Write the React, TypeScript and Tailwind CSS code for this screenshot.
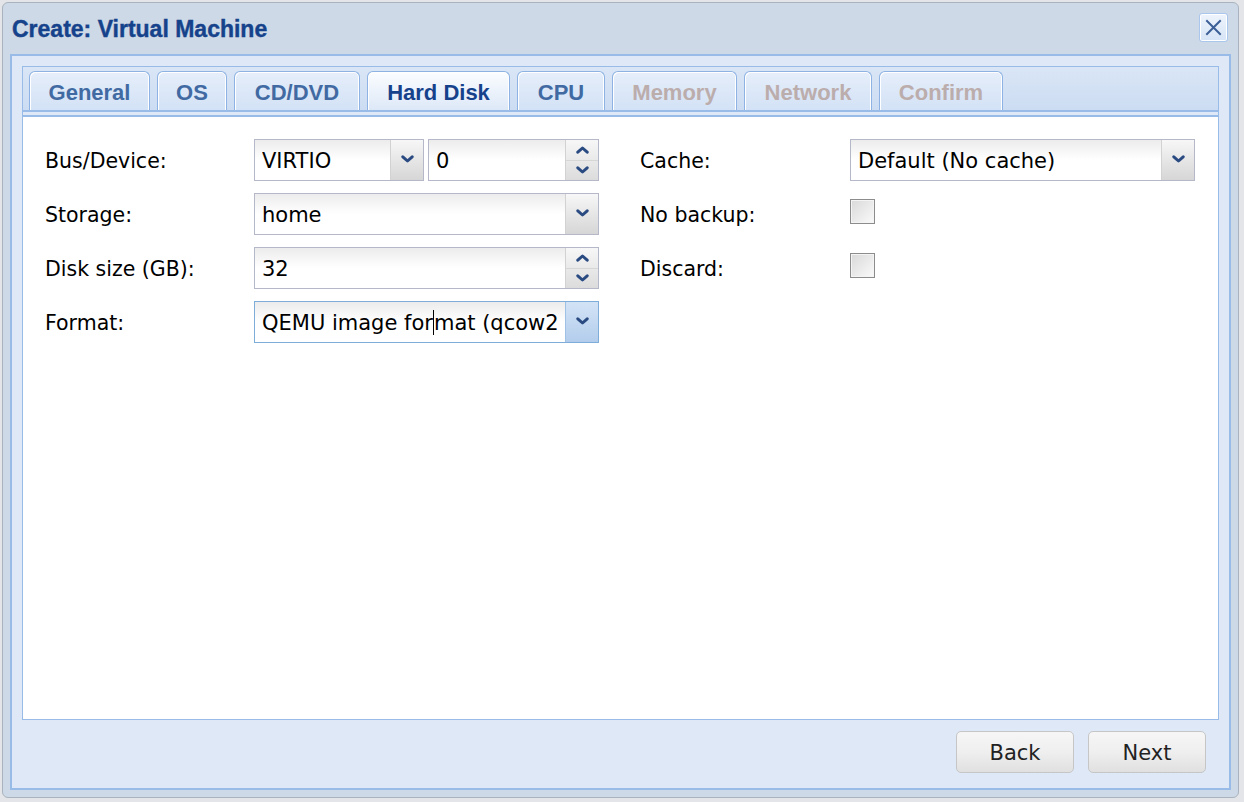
import React from 'react';

const tabs = [
  { label: 'General', width: 'w-[121px]', tone: 'text-[#416aa3]', active: false },
  { label: 'OS', width: 'w-[70px]', tone: 'text-[#416aa3]', active: false },
  { label: 'CD/DVD', width: 'w-[126px]', tone: 'text-[#416aa3]', active: false },
  { label: 'Hard Disk', width: 'w-[143px]', tone: 'text-[#15428b]', active: true },
  { label: 'CPU', width: 'w-[88px]', tone: 'text-[#416aa3]', active: false },
  { label: 'Memory', width: 'w-[125px]', tone: 'text-[#bcadad]', active: false },
  { label: 'Network', width: 'w-[128px]', tone: 'text-[#bcadad]', active: false },
  { label: 'Confirm', width: 'w-[124px]', tone: 'text-[#bcadad]', active: false },
];

const fieldFont = "[font-family:'DejaVu_Sans',Verdana,sans-serif]";

function ChevronDown() {
  return (
    <svg width="13" height="8" viewBox="0 0 13 8">
      <path d="M1.8 1.8 L6.5 6 L11.2 1.8" fill="none" stroke="#2a4a82" strokeWidth="3" strokeLinecap="round" strokeLinejoin="round" />
    </svg>
  );
}

function ChevronUp() {
  return (
    <svg width="13" height="8" viewBox="0 0 13 8">
      <path d="M1.8 6.2 L6.5 2 L11.2 6.2" fill="none" stroke="#2a4a82" strokeWidth="3" strokeLinecap="round" strokeLinejoin="round" />
    </svg>
  );
}

function Combo({ value, width, focused, cursorAt }: { value: string; width: string; focused?: boolean; cursorAt?: number }) {
  return (
    <div
      className={`${width} h-[42px] flex border bg-white ${
        focused ? 'border-[#7eadd9]' : 'border-[#b5b8c8]'
      }`}
    >
      <div className={`flex-1 min-w-0 flex items-center pl-[7px] pt-[3px] text-[21px] text-black bg-gradient-to-b from-[#ececec] via-white to-white ${fieldFont}`}>
        <div className="flex-1 min-w-0 mr-[4px] overflow-hidden whitespace-nowrap">
          {cursorAt !== undefined ? (
            <span>
              {value.slice(0, cursorAt)}
              <span className="inline-block w-px h-[25px] bg-black align-[-5px]" />
              {value.slice(cursorAt)}
            </span>
          ) : (
            value
          )}
        </div>
      </div>
      <div
        className={`w-[33px] shrink-0 flex items-center justify-center pb-[3px] border-l ${
          focused
            ? 'bg-gradient-to-b from-[#d3e3f6] to-[#b3cdec] border-[#9fc1e6]'
            : 'bg-gradient-to-b from-[#f7f7f7] to-[#d6d6d6] border-[#d2d2d2]'
        }`}
      >
        <ChevronDown />
      </div>
    </div>
  );
}

function Spinner({ value, width }: { value: string; width: string }) {
  return (
    <div className={`${width} h-[42px] flex border border-[#b5b8c8] bg-white`}>
      <div className={`flex-1 min-w-0 flex items-center pl-[7px] pt-[3px] text-[21px] text-black bg-gradient-to-b from-[#ececec] via-white to-white ${fieldFont}`}>
        {value}
      </div>
      <div className="w-[33px] shrink-0 flex flex-col border-l border-[#d2d2d2] bg-gradient-to-b from-[#f7f7f7] to-[#dcdcdc]">
        <div className="flex-1 flex items-center justify-center border-b border-[#d6d6d6]">
          <ChevronUp />
        </div>
        <div className="flex-1 flex items-center justify-center">
          <ChevronDown />
        </div>
      </div>
    </div>
  );
}

function Checkbox() {
  return (
    <div className="w-[25px] h-[25px] border border-[#8c8c8c] bg-gradient-to-br from-[#d9d9d9] to-[#fafafa] shadow-[inset_0_0_0_1px_#f4f4f4]" />
  );
}

function Label({ text, width }: { text: string; width: string }) {
  return <div className={`${width} shrink-0 pt-[3px] text-[20.5px] text-black ${fieldFont}`}>{text}</div>;
}

export default function App() {
  return (
    <div className="w-[1244px] h-[802px] bg-[#e3e5e8] pt-[2px] pl-[2px] overflow-hidden">
      <div className="w-[1237px] h-[796px] rounded-[6px] border border-[#a9b3bf] bg-[#cdd9e6] flex flex-col px-[7px] pb-[7px]">
        {/* title bar */}
        <div className="h-[51px] shrink-0 flex items-center justify-between pl-[2px] pr-[3px]">
          <h1 className="text-[23px] font-bold text-[#15428b] [font-family:'Liberation_Sans',Arial,sans-serif] pt-[2px] [-webkit-text-stroke:0.4px_#15428b]">
            Create: Virtual Machine
          </h1>
          <button className="w-[29px] h-[29px] mb-[2px] rounded-[3px] border border-[#a9c6ec] bg-gradient-to-b from-[#eef4fc] to-[#d6e4f6] shadow-[inset_0_0_0_1px_#ffffff] flex items-center justify-center">
            <svg width="17" height="17" viewBox="0 0 17 17">
              <path d="M2 2 L15 15 M15 2 L2 15" stroke="#3c5f97" strokeWidth="2" strokeLinecap="square" />
            </svg>
          </button>
        </div>

        {/* main panel */}
        <div className="flex-1 flex flex-col border-2 border-[#99bbe8] bg-[#dfe8f6] px-[10px] pt-[10px]">
          <div className="flex-1 flex flex-col border border-[#99bbe8]">
            {/* tab strip */}
            <div className="bg-gradient-to-b from-[#dae6f6] to-[#cadbf2]">
              <div className="flex gap-[7px] pl-[6px] pt-[4px] h-[43px]">
                {tabs.map((t) => (
                  <div
                    key={t.label}
                    className={`${t.width} h-[39px] rounded-t-[6px] border border-b-0 border-[#8db2e3] shadow-[inset_1px_1px_0_#ffffff,inset_-1px_0_0_#ffffff] flex items-center justify-center pt-[2px] text-[22px] font-bold [font-family:'Liberation_Sans',Arial,sans-serif] ${
                      t.active
                        ? 'bg-gradient-to-b from-[#fbfdff] to-[#dde8f7]'
                        : 'bg-gradient-to-b from-[#e6eefa] to-[#d3e2f6]'
                    } ${t.tone}`}
                  >
                    {t.label}
                  </div>
                ))}
              </div>
              <div className="h-[2px] bg-[#99bbe8]" />
              <div className="h-[3px] bg-[#dfe8f6]" />
            </div>

            {/* body */}
            <div className="flex-1 bg-white border-t-2 border-[#99bbe8] px-[22px] pt-[22px]">
              <div className="flex gap-[41px]">
                <div className="w-[554px] flex flex-col gap-[12px]">
                  <div className="h-[42px] flex items-center">
                    <Label text="Bus/Device:" width="w-[209px]" />
                    <div className="flex gap-[4px]">
                      <Combo value="VIRTIO" width="w-[170px]" />
                      <Spinner value="0" width="w-[171px]" />
                    </div>
                  </div>
                  <div className="h-[42px] flex items-center">
                    <Label text="Storage:" width="w-[209px]" />
                    <Combo value="home" width="w-[345px]" />
                  </div>
                  <div className="h-[42px] flex items-center">
                    <Label text="Disk size (GB):" width="w-[209px]" />
                    <Spinner value="32" width="w-[345px]" />
                  </div>
                  <div className="h-[42px] flex items-center">
                    <Label text="Format:" width="w-[209px]" />
                    <Combo value="QEMU image format (qcow2" width="w-[345px]" focused cursorAt={14} />
                  </div>
                </div>
                <div className="w-[555px] flex flex-col gap-[12px]">
                  <div className="h-[42px] flex items-center">
                    <Label text="Cache:" width="w-[210px]" />
                    <Combo value="Default (No cache)" width="w-[345px]" />
                  </div>
                  <div className="h-[42px] flex items-center">
                    <Label text="No backup:" width="w-[210px]" />
                    <div className="-mt-[6px]">
                      <Checkbox />
                    </div>
                  </div>
                  <div className="h-[42px] flex items-center">
                    <Label text="Discard:" width="w-[210px]" />
                    <div className="-mt-[6px]">
                      <Checkbox />
                    </div>
                  </div>
                </div>
              </div>
            </div>
          </div>

          {/* footer buttons */}
          <div className="h-[68px] shrink-0 flex justify-end items-start gap-[14px] pt-[11px] pr-[13px]">
            {['Back', 'Next'].map((b) => (
              <button
                key={b}
                className={`w-[118px] h-[42px] pt-[3px] rounded-[5px] border border-[#c6c6c6] bg-gradient-to-b from-[#f6f6f6] via-[#efefef] to-[#e0e0e0] text-[21px] text-[#222] ${fieldFont}`}
              >
                {b}
              </button>
            ))}
          </div>
        </div>
      </div>
    </div>
  );
}
